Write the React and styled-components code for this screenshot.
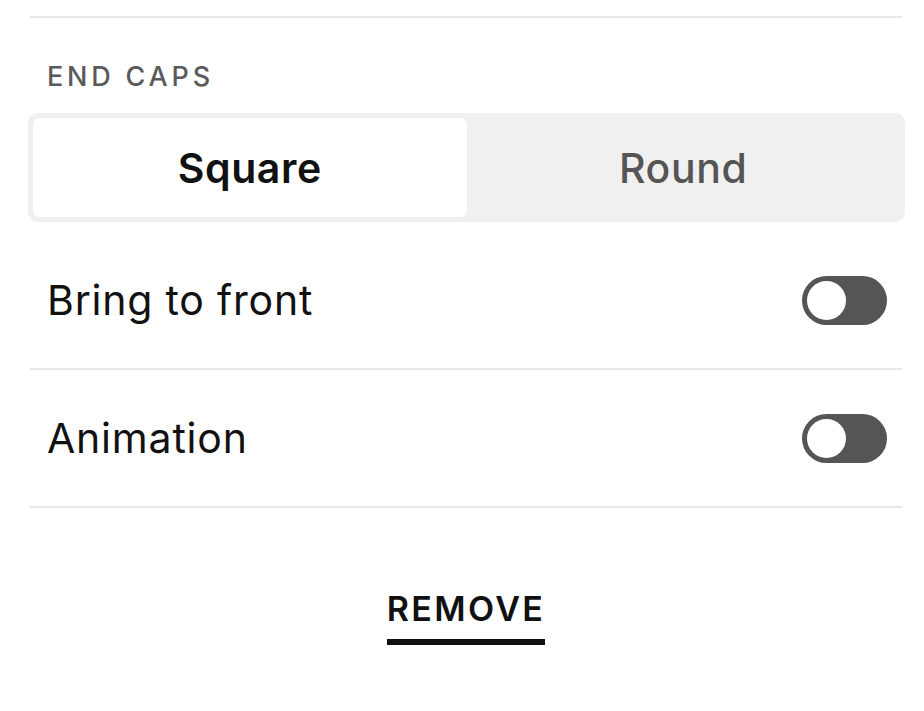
import { useState } from 'react';
import styled, { createGlobalStyle } from 'styled-components';

const GlobalStyle = createGlobalStyle`
  html, body {
    margin: 0;
    padding: 0;
    background: #ffffff;
  }
  body {
    font-family: Inter, "Liberation Sans", Arial, sans-serif;
    color: #111111;
  }
`;

const Panel = styled.div`
  width: 872px;
  margin-left: 30px;
  padding-top: 16px;
`;

const Divider = styled.div`
  height: 2px;
  background: #e8e8e8;
`;

const SectionLabel = styled.div`
  margin: 41px 0 18px 17px;
  font-size: 27px;
  line-height: 36px;
  font-weight: 500;
  letter-spacing: 3.8px;
  color: #5a5a5a;
`;

const Segmented = styled.div`
  display: grid;
  grid-template-columns: 1fr 1fr;
  margin: 0 -3px 10px -2px;
  padding: 5px;
  height: 109px;
  box-sizing: border-box;
  background: #f0f0f0;
  border-radius: 10px;
`;

const Segment = styled.button`
  border: none;
  border-radius: 7px;
  background: ${p => (p.$active ? '#ffffff' : 'transparent')};
  color: ${p => (p.$active ? '#111111' : '#555555')};
  font-family: inherit;
  font-size: 41px;
  font-weight: ${p => (p.$active ? 600 : 500)};
  letter-spacing: 0.6px;
  cursor: pointer;
  padding: 0;
`;

const Row = styled.div`
  display: flex;
  align-items: center;
  justify-content: space-between;
  height: 136px;
  padding: 0 15px 0 17px;
  border-bottom: 2px solid #e8e8e8;
`;

const RowLabel = styled.span`
  font-size: 41px;
  font-weight: 400;
  letter-spacing: 0.8px;
  color: #111111;
`;

const Toggle = styled.button`
  position: relative;
  width: 85px;
  height: 49px;
  border: none;
  border-radius: 25px;
  background: ${p => (p.$on ? '#111111' : '#555555')};
  cursor: pointer;
  padding: 0;

  &::after {
    content: '';
    position: absolute;
    top: 5px;
    left: ${p => (p.$on ? '41px' : '5px')};
    width: 39px;
    height: 39px;
    border-radius: 50%;
    background: #ffffff;
  }
`;

const Footer = styled.div`
  display: flex;
  justify-content: center;
  padding-top: 80px;
`;

const RemoveLink = styled.button`
  border: none;
  background: none;
  padding: 0 0 10px;
  border-bottom: 6px solid #111111;
  font-family: inherit;
  font-size: 34px;
  font-weight: 600;
  letter-spacing: 2.4px;
  color: #111111;
  cursor: pointer;
`;

export default function App() {
  const [cap, setCap] = useState('square');
  const [front, setFront] = useState(false);
  const [anim, setAnim] = useState(false);

  return (
    <>
      <GlobalStyle />
      <Panel>
        <Divider />
        <SectionLabel>END CAPS</SectionLabel>
        <Segmented>
          <Segment $active={cap === 'square'} onClick={() => setCap('square')}>
            Square
          </Segment>
          <Segment $active={cap === 'round'} onClick={() => setCap('round')}>
            Round
          </Segment>
        </Segmented>
        <Row>
          <RowLabel>Bring to front</RowLabel>
          <Toggle $on={front} onClick={() => setFront(!front)} />
        </Row>
        <Row>
          <RowLabel>Animation</RowLabel>
          <Toggle $on={anim} onClick={() => setAnim(!anim)} />
        </Row>
        <Footer>
          <RemoveLink>REMOVE</RemoveLink>
        </Footer>
      </Panel>
    </>
  );
}
